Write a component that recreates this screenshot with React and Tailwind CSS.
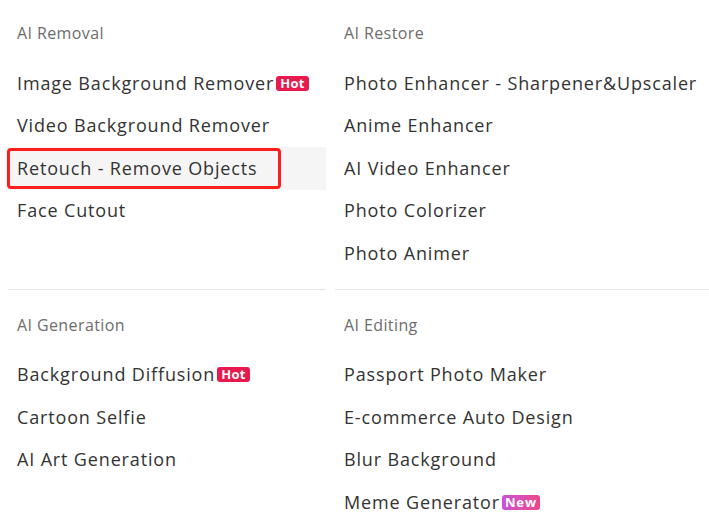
import React from 'react';

const sections = [
    {
        title: 'AI Removal',
        items: [
            { label: 'Image Background Remover', badge: 'hot' },
            { label: 'Video Background Remover' },
            { label: 'Retouch - Remove Objects', active: true },
            { label: 'Face Cutout' },
        ],
    },
    {
        title: 'AI Restore',
        items: [
            { label: 'Photo Enhancer - Sharpener&Upscaler' },
            { label: 'Anime Enhancer' },
            { label: 'AI Video Enhancer' },
            { label: 'Photo Colorizer' },
            { label: 'Photo Animer' },
        ],
    },
    {
        title: 'AI Generation',
        items: [
            { label: 'Background Diffusion', badge: 'hot' },
            { label: 'Cartoon Selfie' },
            { label: 'AI Art Generation' },
        ],
    },
    {
        title: 'AI Editing',
        items: [
            { label: 'Passport Photo Maker' },
            { label: 'E-commerce Auto Design' },
            { label: 'Blur Background' },
            { label: 'Meme Generator', badge: 'new' },
        ],
    },
];

function Badge({ type }) {
    if (type === 'hot') {
        return (
            <span className="ml-[2px] inline-flex items-center h-[15px] px-[4px] rounded-[3px] bg-[#e8194d] text-white text-[13px] font-bold leading-none tracking-[0.3px]">
                Hot
            </span>
        );
    }
    return (
        <span className="ml-[2px] inline-flex items-center h-[15px] px-[3px] rounded-[3px] bg-gradient-to-r from-[#c84fd8] to-[#f0458a] text-white text-[13px] font-bold leading-none">
            New
        </span>
    );
}

function Section({ section, top, left }) {
    const pad = left ? 'px-[11px]' : 'px-[9px]';
    return (
        <div className={`flex flex-col ${top ? 'pt-[23px]' : 'pt-[25px]'}`}>
            <div className={`${pad} text-[16px] leading-[20px] tracking-[0.4px] text-[#6d6d6d] mb-[19px]`}>
                {section.title}
            </div>
            {section.items.map((item) => (
                <div
                    key={item.label}
                    className={`relative flex items-center h-[42.5px] ${pad} text-[18px] tracking-[0.85px] text-[#333333] ${item.active ? 'bg-[#f5f5f5]' : ''}`}
                >
                    <span>{item.label}</span>
                    {item.badge && <Badge type={item.badge} />}
                    {item.active && (
                        <div className="absolute left-[1px] top-[1px] w-[274px] h-[41px] border-[3px] border-[#ff1e1e] rounded-[4px]" />
                    )}
                </div>
            ))}
            {top && <div className={`mt-auto pt-[14px] ${left ? 'pl-[2px]' : ''}`}><div className="h-px bg-[#e3e3e3]" /></div>}
        </div>
    );
}

export default function App() {
    return (
        <div
            className="w-[709px] h-[530px] bg-white overflow-hidden pl-[6px]"
            style={{ fontFamily: '"Open Sans", "Noto Sans", sans-serif' }}
        >
            <div className="grid grid-cols-[320px_1fr] gap-x-[9px]">
                <Section section={sections[0]} top left />
                <Section section={sections[1]} top />
                <Section section={sections[2]} left />
                <Section section={sections[3]} />
            </div>
        </div>
    );
}
